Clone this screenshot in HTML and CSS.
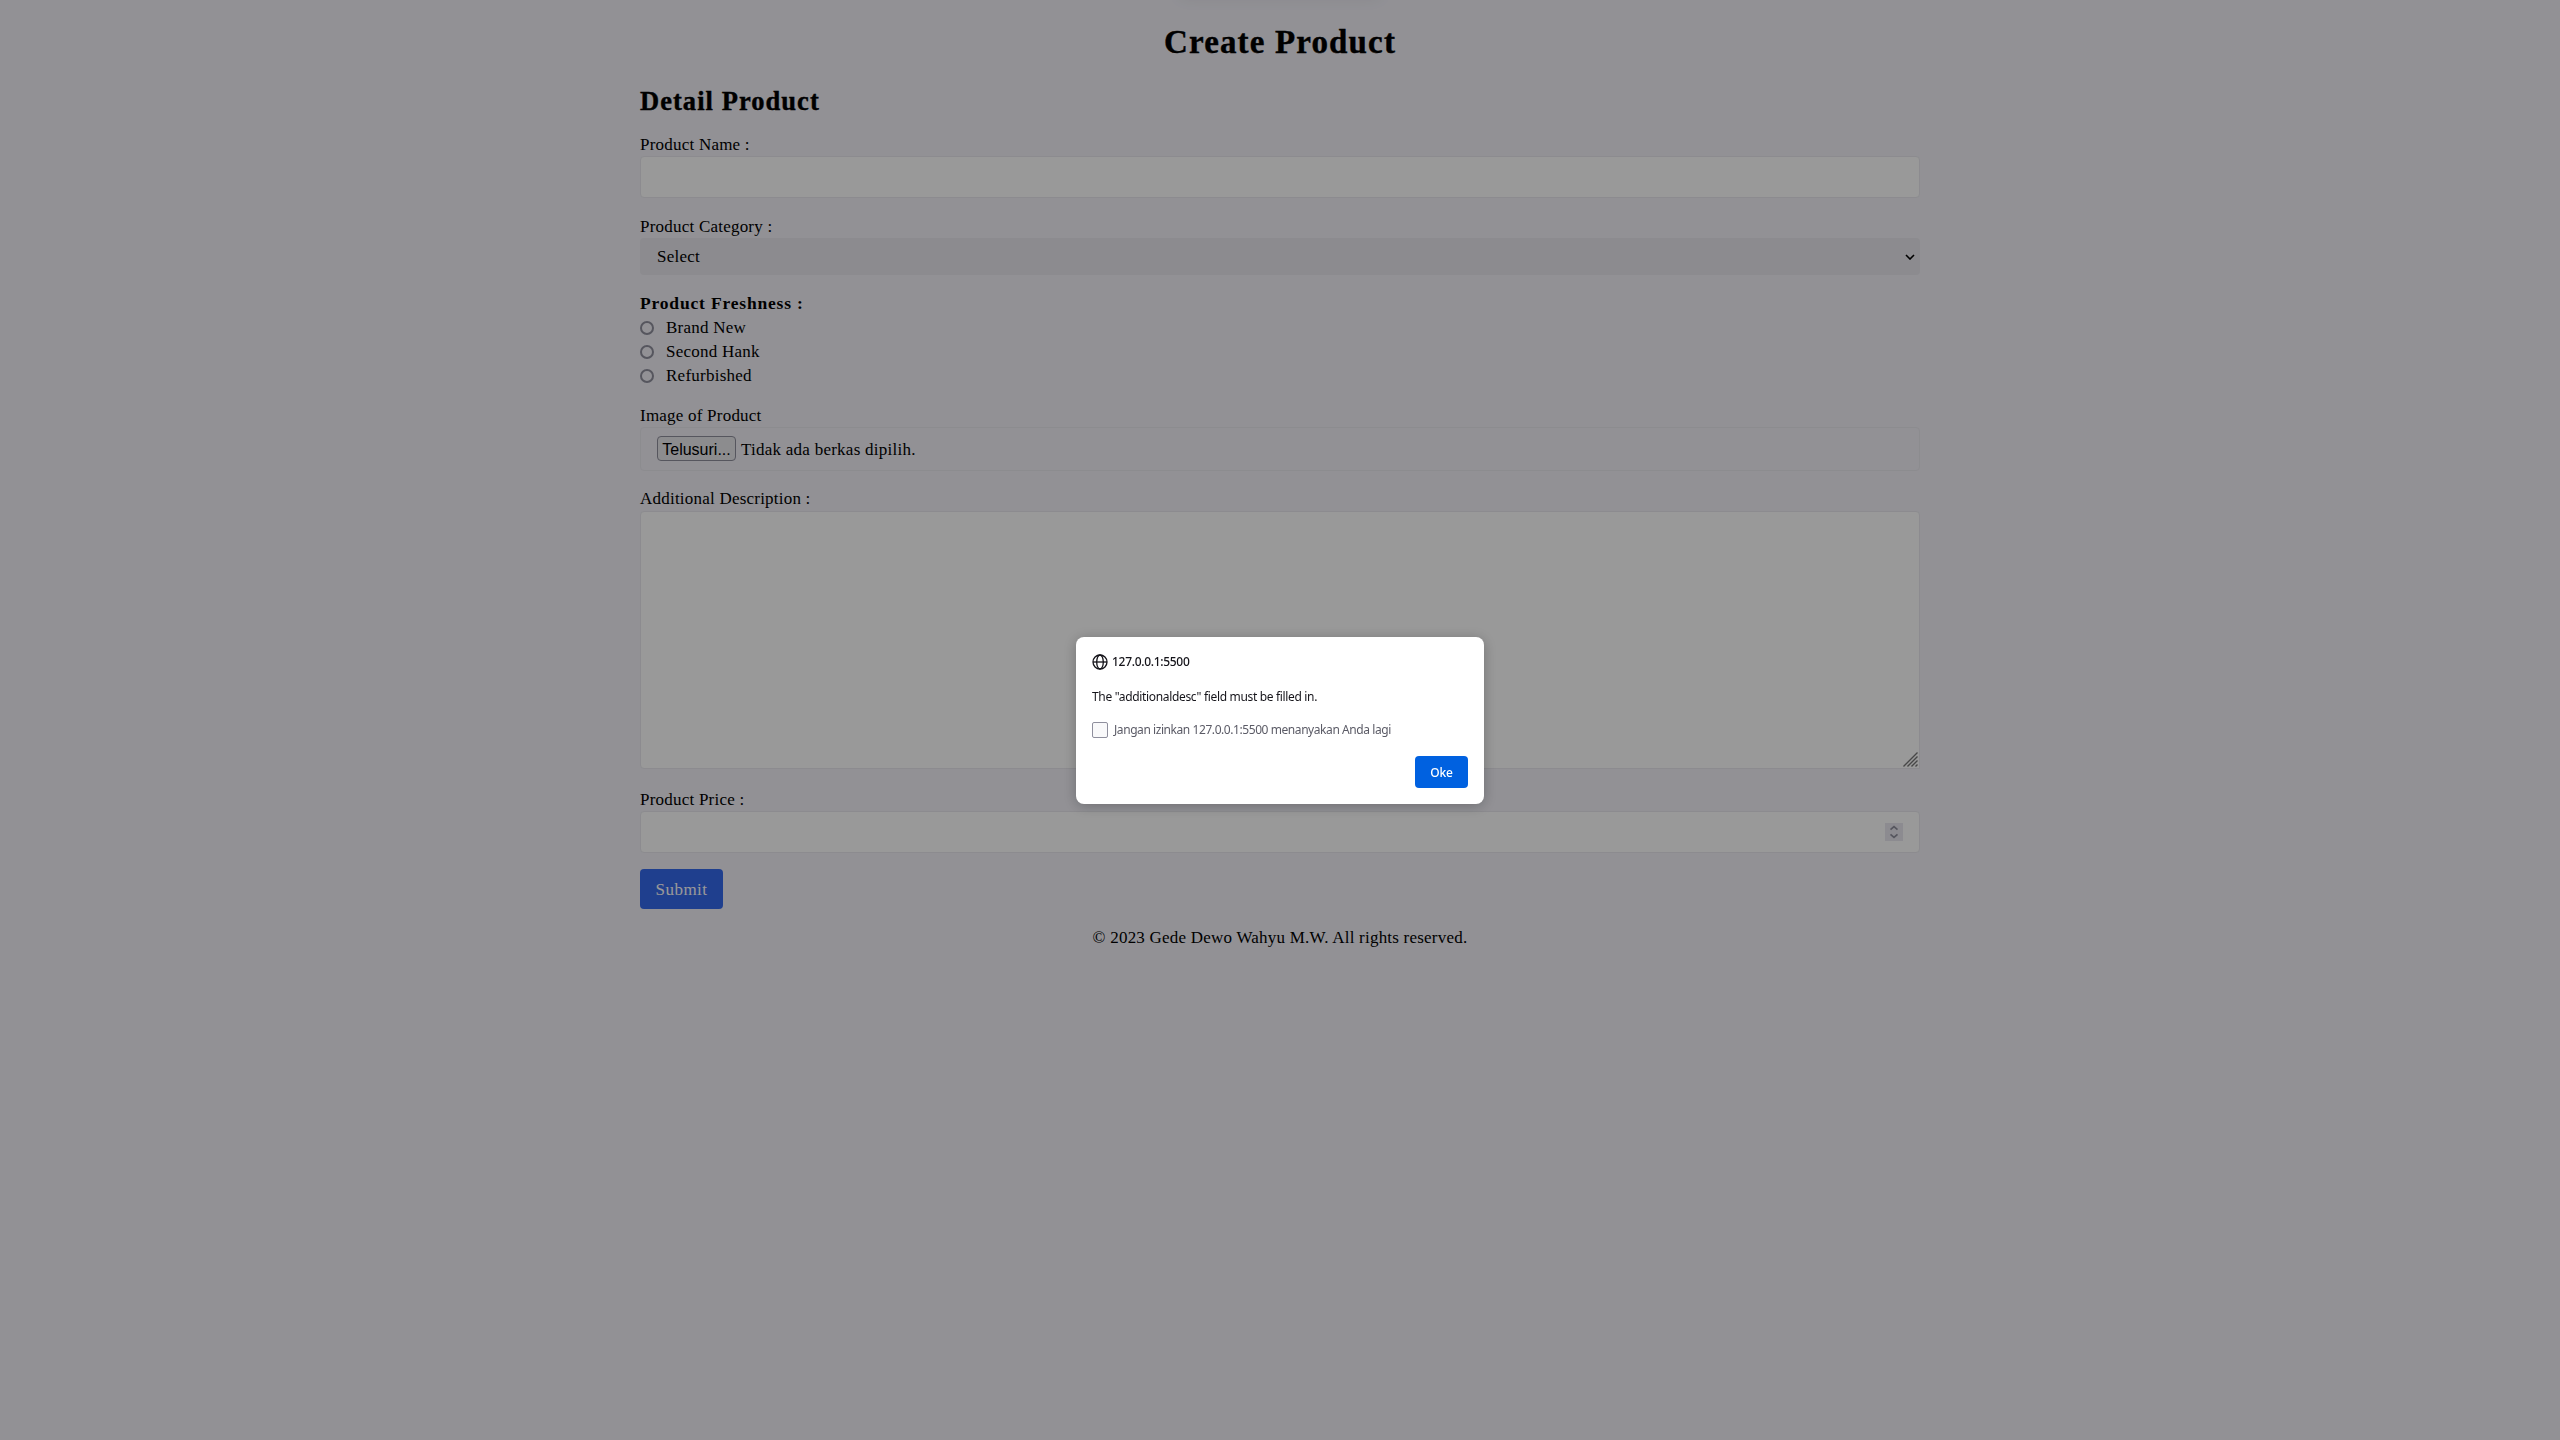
FILE: index.html
```
<!DOCTYPE html>
<html lang="id">
<head>
<meta charset="utf-8">
<title>Create Product</title>
<link rel="stylesheet" href="styles.css">
</head>
<body>
<main class="page">
  <h1 class="title">Create Product</h1>
  <form class="form">
    <h2 class="subtitle">Detail Product</h2>
    <div class="field name">
      <label class="label" for="name">Product Name :</label>
      <input class="box" id="name" type="text">
    </div>
    <div class="field category">
      <label class="label">Product Category :</label>
      <div class="select"><span>Select</span>
        <svg width="10" height="6" viewBox="0 0 10 6"><path d="M1 1l4 4 4-4" fill="none" stroke="#000" stroke-width="1.6"/></svg>
      </div>
    </div>
    <div class="field freshness">
      <strong>Product Freshness :</strong>
      <label class="choice"><i class="radio"></i><span>Brand New</span></label>
      <label class="choice"><i class="radio"></i><span>Second Hank</span></label>
      <label class="choice"><i class="radio"></i><span>Refurbished</span></label>
    </div>
    <div class="field image">
      <label class="label">Image of Product</label>
      <div class="file"><span class="browse">Telusuri...</span><span class="file-name">Tidak ada berkas dipilih.</span></div>
    </div>
    <div class="field description">
      <label>Additional Description :</label>
      <div class="area">
        <svg width="15" height="15" viewBox="0 0 15 15"><path d="M.5 14.5l14-14M4.5 14.5l10-10M8.5 14.5l6-6M12.5 14.5l2-2" stroke="#777" stroke-width="1.4"/></svg>
      </div>
    </div>
    <div class="field price">
      <label class="label">Product Price :</label>
      <div class="box number">
        <span class="spinner"><svg width="18" height="18" viewBox="0 0 18 18"><path d="M5.5 6.7L9 3.7l3.500 3M5.500 11.300l3.500 3 3.500-3" fill="none" stroke="#8f8f9d" stroke-width="1.700"/></svg></span>
      </div>
    </div>
    <button class="submit" type="button">Submit</button>
  </form>
  <footer class="footer">© <span class="year">2023</span> Gede Dewo Wahyu M.W. All rights reserved.</footer>
</main>
<div class="top-shadow"></div>
<div class="overlay">
  <section class="dialog">
    <header class="origin">
      <svg width="16" height="16" viewBox="0 0 16 16" fill="none" stroke="#15141a" stroke-width="1.300"><circle cx="8" cy="8" r="7"/><ellipse cx="8" cy="8" rx="3.300" ry="7"/><path d="M1 8h14"/></svg>
      <span>127.0.0.1:5500</span>
    </header>
    <p class="message">The "additionaldesc" field must be filled in.</p>
    <div class="block"><i class="check"></i><span>Jangan izinkan 127.0.0.1:5500 menanyakan Anda lagi</span></div>
    <button class="ok" type="button">Oke</button>
  </section>
</div>
</body>
</html>
```
FILE: styles.css
```
* { box-sizing: border-box; }
body {
  margin: 0;
  height: 1440px;
  overflow: hidden;
  background: #f3f2f9;
  color: #000;
  font: 17px/24px "Liberation Serif", serif;
  letter-spacing: .22px;
}
.page { width: 1280px; margin: 0 auto; padding-top: 24px; }
.title, .subtitle { -webkit-text-stroke: .4px #000; }
.title { margin: 0 0 24px; font-size: 33px; line-height: 36px; letter-spacing: 1.15px; text-align: center; }
.subtitle { margin: 0 0 15px; padding-top: 1px; font-size: 26.5px; line-height: 32px; letter-spacing: 1.05px; }
.form { display: flex; flex-direction: column; align-items: stretch; }
.field { display: flex; flex-direction: column; margin-bottom: 16px; }
.label { height: 24px; line-height: 26px; }
.box { width: 100%; height: 42px; padding: 8px 16px; border: 1px solid #e9e8ee; border-radius: 4px; background: #fff; }
.select {
  display: flex; align-items: center; justify-content: space-between;
  height: 37px; padding: 0 5px 0 17px; border-radius: 4px; background: #e9e8ee;
}
.category { margin-bottom: 17px; }
.freshness { margin-bottom: 15px; }
strong { height: 24px; font-size: 17.5px; line-height: 23px; letter-spacing: .82px; }
.choice { display: flex; align-items: center; gap: 12px; letter-spacing: .25px; }
.radio { width: 14px; height: 14px; border: 2px solid #8f8f9d; border-radius: 50%; }
.file {
  display: flex; align-items: center; gap: 5px;
  height: 44px; padding: 0 16px 1px; border: 1px solid #eae9ef; border-radius: 4px;
}
.file-name { padding-top: 2px; letter-spacing: .25px; }
.browse {
  width: 79px; height: 25px; border: 1px solid #8f8f9d; border-radius: 4px; background: #e9e9ed;
  font: 16px/25px "Liberation Sans", sans-serif; letter-spacing: 0; text-align: center;
}
.area {
  display: flex; align-items: flex-end; justify-content: flex-end;
  height: 258px; padding: 1px; border: 1px solid #e9e8ee; border-radius: 4px 4px 0 4px; background: #fff;
}
.description { margin-bottom: 18px; }
.number { display: flex; align-items: center; justify-content: flex-end; padding-right: 16px; }
.spinner { width: 18px; height: 18px; background: #e9e8f0; line-height: 0; }
.submit {
  width: 83px; height: 40px; padding: 1px 0 0; border: 0; border-radius: 4px; background: #3569ed; color: #fff;
  font: 17px/24px "Liberation Serif", serif; letter-spacing: .5px;
}
.footer { margin-top: 17px; text-align: center; letter-spacing: .22px; }
.year { font-size: 17px; }
.top-shadow {
  position: absolute; top: -20px; left: 1180px; width: 200px; height: 18px;
  box-shadow: 0 0 16px rgba(0, 0, 0, .07);
}
.overlay {
  position: fixed; inset: 0; display: flex; align-items: center; justify-content: center;
  padding-top: 1px; background: rgba(0, 0, 0, .4);
}
.dialog {
  display: flex; flex-direction: column; width: 408px; height: 167px; padding: 17px 16px 16px;
  border-radius: 8px; background: #fff; box-shadow: 0 2px 14px rgba(0, 0, 0, .25);
  color: #15141a; font: 12px/16px "Noto Sans", sans-serif; letter-spacing: -.33px;
}
.origin { display: flex; align-items: center; gap: 4px; font-weight: 500; letter-spacing: -.3px; }
.message { margin: 19px 0 17px; }
.block { display: flex; align-items: center; gap: 6px; color: #5b5b66; letter-spacing: -.43px; }
.check { width: 16px; height: 16px; border: 1px solid #8f8f9d; border-radius: 2px; background: #f9f9fa; }
.ok {
  align-self: flex-end; width: 53px; height: 32px; margin-top: 18px; padding: 0; border: 0; border-radius: 4px;
  background: #0061e0; color: #fff; font: 500 12px "Noto Sans", sans-serif; letter-spacing: -.2px;
}
```
